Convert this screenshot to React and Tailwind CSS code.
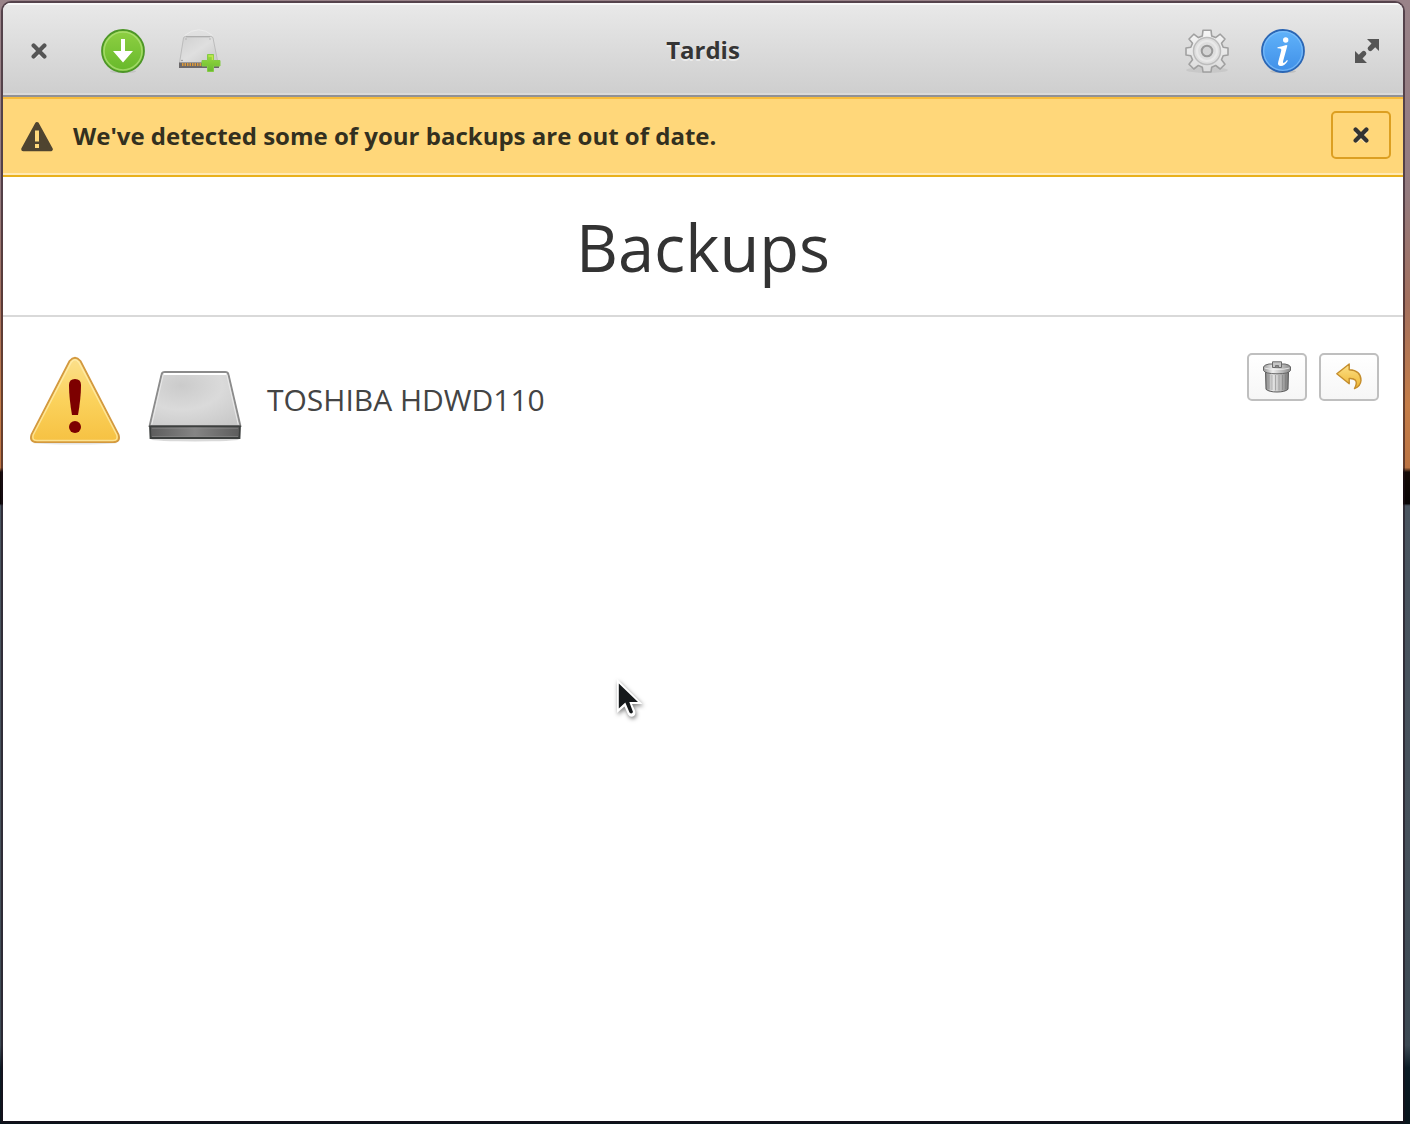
import React from "react";

const CloseGlyph = ({ className }) => (
  <svg viewBox="0 0 16 16" className={className} aria-hidden="true">
    <path d="M2.6 2.6 L13.4 13.4 M13.4 2.6 L2.6 13.4" stroke="#fff" strokeOpacity="0.5" strokeWidth="4" transform="translate(0 1.4)" />
    <path d="M2.6 2.6 L13.4 13.4 M13.4 2.6 L2.6 13.4" stroke="currentColor" strokeWidth="4.2" strokeLinecap="round" />
  </svg>
);

const DownloadIcon = () => (
  <svg viewBox="0 0 48 48" className="size-12" aria-hidden="true">
    <defs>
      <linearGradient id="dl" x1="0" y1="0" x2="0" y2="1">
        <stop offset="0" stopColor="#8fd043" />
        <stop offset="1" stopColor="#66b82a" />
      </linearGradient>
    </defs>
    <ellipse cx="24" cy="44.5" rx="13" ry="1.6" fill="#000" opacity="0.08" />
    <circle cx="24" cy="24" r="21" fill="url(#dl)" stroke="#4d9627" strokeWidth="1.8" />
    <circle cx="24" cy="24" r="19" fill="none" stroke="#b4e27c" strokeOpacity="0.7" strokeWidth="1.6" />
    <path d="M22 12h4v12h8L24 35.5 14 24h8z" fill="#fff" />
  </svg>
);

const AddDriveIcon = () => (
  <svg viewBox="0 0 48 48" className="size-12" aria-hidden="true">
    <defs>
      <linearGradient id="ad" x1="0" y1="0" x2="1" y2="1">
        <stop offset="0" stopColor="#d0d0d0" />
        <stop offset="0.5" stopColor="#dfdfdf" />
        <stop offset="1" stopColor="#c8c8c8" />
      </linearGradient>
      <linearGradient id="plus" x1="0" y1="0" x2="0" y2="1">
        <stop offset="0" stopColor="#9bdc42" />
        <stop offset="1" stopColor="#68b92e" />
      </linearGradient>
    </defs>
    <path d="M9.5 8.500Q24-3 37.500 8.500" fill="none" stroke="#ebebeb" strokeWidth="1" />
    <path d="M10.5 9.5h25.500q1.500 0 2 1.500L43 36H4.500L8.500 11q.5-1.500 2-1.500z" fill="url(#ad)" stroke="#bcbcbc" strokeWidth="1" />
    <path d="M11 9.800h24" stroke="#aaa" strokeWidth="1" />
    <path d="M4 35.500h40V41H4z" fill="#6a6769" />
    <path d="M7 37.500h24" stroke="#d9983c" strokeWidth="3" strokeDasharray="1.500 1" />
    <circle cx="7" cy="33.500" r=".8" fill="#888" />
    <circle cx="11" cy="12" r=".7" fill="#aaa" />
    <circle cx="35" cy="12" r=".7" fill="#aaa" />
    <path d="M32.500 27.500h6v6H45v5.500h-6.500v5.500h-6V39H27v-5.500h5.500z" fill="url(#plus)" stroke="#84cb45" />
    <path d="M33.500 29h4v4" fill="none" stroke="#c4e64c" strokeWidth="1.500" />
  </svg>
);

const GEAR =
  "M20 3.200h8L28.700 9l3.900 1.600L37.200 7.200 42 12l-3.500 4.300L40.200 20.300 45 21v7l-4.800.700-1.700 4L42 37.200 37.200 42l-4.600-3.500-3.900 1.700L28 45h-8l-.700-4.800-3.900-1.700L10.800 42 6 37.200l3.500-4.500-1.700-4L3 28v-7l4.800-.700 1.700-4L6 12l4.800-4.800 4.600 3.400L19.300 9z";

const GearIcon = () => (
  <svg viewBox="0 0 48 48" className="size-12" aria-hidden="true">
    <defs>
      <linearGradient id="gr" x1="0" y1="0" x2="0" y2="1">
        <stop offset="0" stopColor="#f6f6f6" />
        <stop offset="1" stopColor="#dcdcdc" />
      </linearGradient>
    </defs>
    <ellipse cx="24" cy="43" rx="21" ry="3" fill="#000" opacity="0.06" />
    <path d={GEAR} fill="url(#gr)" stroke="#a0a0a0" strokeWidth="1.600" strokeLinejoin="round" />
    <circle cx="24" cy="24" r="13.500" fill="#dedede" stroke="#bcbcbc" strokeWidth="1.500" />
    <circle cx="24" cy="24" r="10" fill="none" stroke="#e9e9e9" strokeWidth="2" />
    <circle cx="24" cy="24" r="5.300" fill="#d4d4d4" stroke="#999" strokeWidth="2" />
  </svg>
);

const InfoIcon = () => (
  <svg viewBox="0 0 48 48" className="size-12" aria-hidden="true">
    <defs>
      <linearGradient id="inf" x1="0" y1="0" x2="0" y2="1">
        <stop offset="0" stopColor="#61b3fa" />
        <stop offset="1" stopColor="#3f8fe8" />
      </linearGradient>
    </defs>
    <ellipse cx="24" cy="44.500" rx="13" ry="1.600" fill="#000" opacity="0.1" />
    <circle cx="24" cy="24" r="21" fill="url(#inf)" stroke="#2b66b4" strokeWidth="1.800" />
    <circle cx="24" cy="24" r="19.300" fill="none" stroke="#8dc8fb" strokeOpacity="0.6" strokeWidth="1.300" />
    <circle cx="26.700" cy="13" r="2.700" fill="#fff" />
    <path d="M18.500 20.300q5-.6 8.700-2.200l1.200.5-4.300 15.700q-.4 1.700.5 1.700 1.300 0 3.400-2.900l.9.600q-3.300 5.300-7 5.300-3.700 0-2.700-3.900l3-11.400q.5-1.900-1-2.100l-2.700-.3z" fill="#fff" />
  </svg>
);

const ExpandIcon = () => (
  <svg viewBox="0 0 26 26" className="size-[26px]" aria-hidden="true">
    <path d="M13 1h12v12l-3.800-3.800-3.600 3.600q-1.600 1-3.200-.5-1.400-1.500-.4-3l3.500-3.700z" fill="#555" />
    <path d="M13 25H1V13l3.800 3.800 3.600-3.600q1.600-1 3.200.5 1.400 1.500.4 3l-3.500 3.700z" fill="#555" />
  </svg>
);

const AlertGlyph = () => (
  <svg viewBox="0 0 32 32" className="size-8" aria-hidden="true">
    <path d="M16 3L29.800 28.300H2.200z" fill="#4f4430" stroke="#4f4430" strokeWidth="4" strokeLinejoin="round" />
    <path d="M14 9.500h4v11h-4zM14 23h4v4h-4z" fill="#ffd97c" />
  </svg>
);

const WarningIcon = () => (
  <svg viewBox="0 1 96 96" className="size-24" aria-hidden="true">
    <defs>
      <linearGradient id="wn" x1="0" y1="0" x2="0" y2="1">
        <stop offset="0" stopColor="#fbe08c" />
        <stop offset="0.500" stopColor="#fbd25c" />
        <stop offset="1" stopColor="#f6c142" />
      </linearGradient>
    </defs>
    <ellipse cx="48" cy="91" rx="42" ry="1.500" fill="#000" opacity="0.100" />
    <path d="M42.500 9Q48 2.500 53.500 9L91.500 82.500Q94 90.200 86 90.200H10Q2 90.200 4.500 82.500z" fill="url(#wn)" stroke="#d3993f" strokeWidth="1.800" />
    <path d="M44.200 10.200Q48 5.500 51.800 10.200L89.800 83Q91.500 88.500 86 88.500H10Q4.500 88.500 6.200 83z" fill="none" stroke="#fff0b4" strokeOpacity="0.700" strokeWidth="1.500" />
    <path d="M42 33Q42 27 48 27T54 33Q54 46 51 63H45Q42 46 42 33z" fill="#7d0000" />
    <circle cx="48" cy="75" r="6" fill="#7d0000" />
  </svg>
);

const DriveIcon = () => (
  <svg viewBox="0 1 96 96" className="size-24" aria-hidden="true">
    <defs>
      <radialGradient id="dr" cx="0.350" cy="0.250" r="0.900">
        <stop offset="0" stopColor="#cbcbcb" />
        <stop offset="0.500" stopColor="#dadada" />
        <stop offset="1" stopColor="#c8c8c8" />
      </radialGradient>
      <linearGradient id="df" x1="0" y1="0" x2="1" y2="0">
        <stop offset="0" stopColor="#5c5c5c" />
        <stop offset="0.500" stopColor="#858585" />
        <stop offset="1" stopColor="#5c5c5c" />
      </linearGradient>
    </defs>
    <ellipse cx="48" cy="87.500" rx="44" ry="2" fill="#000" opacity="0.150" />
    <path d="M18 20H78Q81 20 81.500 22.500L93.500 74H2.500L14.500 22.500Q15 20 18 20z" fill="url(#dr)" stroke="#8b8b8b" strokeWidth="1.800" />
    <path d="M16.500 22H79.500" stroke="#fff" strokeWidth="2" />
    <path d="M16.200 23L4.800 72.500M79.800 23L91.200 72.500" stroke="#e9e9e9" strokeWidth="1" />
    <path d="M3 74.300H93L92.500 86H3.500z" fill="url(#df)" stroke="#3c3f3e" strokeWidth="1.800" />
    <path d="M5 76.300H91M5 84.500H91" stroke="#8c8c8c" strokeOpacity="0.600" />
  </svg>
);

const TrashIcon = () => (
  <svg viewBox="0 0 32 32" className="size-8" aria-hidden="true">
    <defs>
      <linearGradient id="tr" x1="0" y1="0" x2="1" y2="0">
        <stop offset="0" stopColor="#808080" />
        <stop offset="0.300" stopColor="#e6e6e6" />
        <stop offset="0.600" stopColor="#c4c4c4" />
        <stop offset="1" stopColor="#787878" />
      </linearGradient>
      <linearGradient id="tl" x1="0" y1="0" x2="1" y2="0">
        <stop offset="0" stopColor="#999" />
        <stop offset="0.350" stopColor="#eee" />
        <stop offset="1" stopColor="#8a8a8a" />
      </linearGradient>
    </defs>
    <path d="M4.500 10H27.500L27 28.300Q24 31 16 31T5 28.300z" fill="url(#tr)" stroke="#5c5c5c" />
    <path d="M8 13.500V28M11 14V29M14.500 14V29.500M18 14V29.500M21.500 14V29M24.500 13.500V28" stroke="#777" strokeOpacity="0.500" />
    <path d="M2.500 6Q3 3.800 8 3H24Q29 3.800 29.500 6V9.500Q28 12.800 16 12.800T2.500 9.500z" fill="url(#tl)" stroke="#666" />
    <path d="M3.500 7Q8 8.500 16 8.500T28.500 7" fill="none" stroke="#f2f2f2" strokeOpacity="0.800" />
    <path d="M11.500 6.500V.8H20.500V6.500z" fill="#c6c6c6" stroke="#6a6a6a" />
    <path d="M14.500 6.500V4.500H17.500V6.500" fill="#8a8a8a" stroke="#777" />
  </svg>
);

const RestoreIcon = () => (
  <svg viewBox="0 0 32 32" className="size-8" aria-hidden="true">
    <defs>
      <linearGradient id="rs" x1="0" y1="0" x2="0" y2="1">
        <stop offset="0" stopColor="#fde28a" />
        <stop offset="1" stopColor="#eeb42f" />
      </linearGradient>
    </defs>
    <path d="M3.800 12.800L16.200 3V8.800Q28 9.500 28 19.500 27.500 25.500 21.500 27.500 24.500 22 22.500 19.300 20.500 17.200 16.200 17.500V22.800z" fill="url(#rs)" stroke="#c48d2c" strokeWidth="1.400" strokeLinejoin="round" />
  </svg>
);

const Pointer = () => (
  <svg
    viewBox="0 0 32 42"
    className="absolute left-[615px] top-[677px] h-[42px] w-8 overflow-visible drop-shadow-[1px_2px_2px_rgba(0,0,0,0.5)]"
    aria-hidden="true"
  >
    <path d="M2 2V36L9.500 29.500L13 37.500Q16 41.500 19.500 38.500Q21 36.500 20 33.500L17 27H27.500z" fill="#fff" />
    <path d="M3.800 6.500V31.500L10.300 25.500L14.500 35.500Q16.800 37.500 18 35L14.300 25H23z" fill="#16191b" />
  </svg>
);

const TOOL = "flex size-12 items-center justify-center";
const ROW_BUTTON =
  "flex h-12 w-[60px] items-center justify-center rounded-[5px] border-2 border-[#bfbfbf] bg-linear-to-b from-white to-[#f6f6f6]";

export default function App() {
  return (
    <div className="relative flex min-h-screen flex-col bg-[linear-gradient(to_bottom,#998389_0,#947b80_17%,#a4705e_27%,#c57d48_36%,#bd7443_41.6%,#140b08_42%,#090506_44.8%,#4a5560_45%,#46515b_75%,#3c4953_93%,#0b1c26_95%,#08141b_100%)] pt-[3px] pr-[7px] pb-[3px] pl-[3px] font-['Open_Sans',sans-serif] text-[#333]">
      <div className="flex grow flex-col overflow-hidden rounded-t-[8px] bg-white shadow-[0_0_0_2px_rgba(30,15,25,0.55)]">
        <header className="grid h-[94px] grid-cols-[1fr_auto_1fr] items-center border-b-2 border-[#919195] bg-linear-to-b from-[#e9e9e9] to-[#cecece] pt-1 shadow-[inset_0_2px_0_#f8f8f8,inset_0_-2px_0_#dadada]">
          <div className="flex items-center pl-3">
            <button type="button" aria-label="Close" className={TOOL}>
              <CloseGlyph className="size-4 text-[#555]" />
            </button>
            <button type="button" aria-label="Back up now" className={TOOL + " ml-9"}>
              <DownloadIcon />
            </button>
            <button type="button" aria-label="Add backup drive" className={TOOL + " ml-7"}>
              <AddDriveIcon />
            </button>
          </div>
          <h1 className="pb-0.5 text-2xl font-bold text-[#353535] [text-shadow:0_2px_0_rgba(255,255,255,0.5)]">Tardis</h1>
          <div className="flex items-center justify-end pr-3">
            <button type="button" aria-label="Settings" className={TOOL}>
              <GearIcon />
            </button>
            <button type="button" aria-label="Information" className={TOOL + " ml-7"}>
              <InfoIcon />
            </button>
            <button type="button" aria-label="Maximize" className={TOOL + " ml-9"}>
              <ExpandIcon />
            </button>
          </div>
        </header>

        <div role="alert" className="flex h-20 items-center border-y-2 border-t-[#f6bc3c] border-b-[#e9b11c] bg-[#ffd77a] pr-3 pl-[18px] shadow-[inset_0_-2px_0_#ffe9b5]">
          <AlertGlyph />
          <p className="ml-5 grow pb-0.5 text-2xl font-bold text-[#33301f]">We've detected some of your backups are out of date.</p>
          <button type="button" aria-label="Dismiss" className="mb-1 flex h-12 w-[60px] items-center justify-center rounded-[5px] border-2 border-[#dc9f21]">
            <CloseGlyph className="size-4 text-[#333]" />
          </button>
        </div>

        <h2 className="flex h-[140px] items-center justify-center border-b-2 border-[#d9d9d9] pt-0.5 text-[65px] leading-none">Backups</h2>

        <main className="grow p-6 pt-9">
          <ul>
            <li className="flex items-center">
              <WarningIcon />
              <div className="ml-6">
                <DriveIcon />
              </div>
              <span className="ml-6 grow pb-1 text-[30px] text-[#444]">TOSHIBA HDWD110</span>
              <div className="flex gap-3 self-start">
                <button type="button" aria-label="Remove backup" className={ROW_BUTTON}>
                  <TrashIcon />
                </button>
                <button type="button" aria-label="Restore backup" className={ROW_BUTTON}>
                  <RestoreIcon />
                </button>
              </div>
            </li>
          </ul>
        </main>
      </div>
      <Pointer />
    </div>
  );
}
